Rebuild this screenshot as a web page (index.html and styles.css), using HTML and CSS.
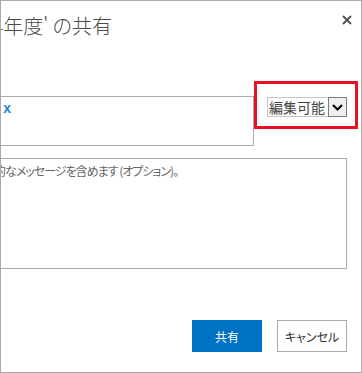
FILE: index.html
```html
<!DOCTYPE html>
<html lang="ja">
<head>
    <meta charset="UTF-8">
    <title>共有</title>
    <link rel="stylesheet" href="styles.css">
</head>
<body>
    <div class="dialog">
        <div class="content">
            <div class="dialog-header">
                <h1 class="dialog-title">'予算 2014年度' の共有</h1>
                <button class="close-btn" title="閉じる">
                    <svg width="10" height="10" viewBox="0 0 10 10">
                        <path d="M1 1 L9 9 M9 1 L1 9" stroke="#555" stroke-width="2" fill="none"/>
                    </svg>
                </button>
            </div>

            <div class="invite-row">
                <div class="people-box">
                    <span class="chip">山田 太郎 <span class="chip-remove">x</span></span>
                </div>
                <div class="highlight">
                    <div class="perm-select">
                        <span class="perm-value">編集可能</span>
                        <span class="perm-arrow">
                            <svg width="11" height="7" viewBox="0 0 11 7">
                                <path d="M1 1 L5.5 5.5 L10 1" stroke="#000" stroke-width="2" fill="none"/>
                            </svg>
                        </span>
                    </div>
                </div>
            </div>

            <div class="message-box">この共有の招待に個人的なメッセージを含めます (オプション)。</div>

            <div class="actions">
                <button class="btn btn-primary">共有</button>
                <button class="btn">キャンセル</button>
            </div>
        </div>
    </div>
</body>
</html>
```

FILE: styles.css
```css
html, body {
    margin: 0;
    padding: 0;
    background-color: #fff;
}
body {
    font-family: "Noto Sans CJK JP", "Noto Sans", sans-serif;
    font-feature-settings: "palt";
}
.dialog {
    width: 362px;
    height: 373px;
    box-sizing: border-box;
    border: 1px solid #ababab;
    padding-right: 14px;
    overflow: hidden;
}
.content {
    margin-left: -200px;
}
.dialog-header {
    display: flex;
    justify-content: space-between;
    align-items: flex-start;
    padding-top: 13px;
}
.dialog-title {
    margin: 0;
    font-size: 20px;
    line-height: 24px;
    font-weight: 300;
    color: #4a4a4a;
    white-space: nowrap;
    padding-left: 110px;
}
.close-btn {
    border: none;
    background: none;
    padding: 0;
    margin: 1px -5px 0 0;
    width: 10px;
    height: 10px;
    display: flex;
}
.invite-row {
    display: flex;
    align-items: flex-start;
    margin-top: 43px;
}
.people-box {
    flex: 1;
    height: 50px;
    box-sizing: border-box;
    margin-top: 15px;
    border: 1px solid #ababab;
    padding: 1px 0 0 139px;
    font-size: 14px;
    line-height: 18px;
    color: #333;
    white-space: nowrap;
}
.chip-remove {
    color: #1e82d6;
    font-family: "Liberation Sans", Arial, sans-serif;
    font-weight: bold;
}
.highlight {
    border: 3px solid #e81123;
    padding: 13px 8px 9px 10px;
    margin-right: -11px;
}
.perm-select {
    display: flex;
    width: 80px;
    height: 20px;
    box-sizing: border-box;
    border: 1px solid #c6c6c6;
}
.perm-value {
    flex: 1;
    font-size: 14px;
    line-height: 18px;
    color: #444;
    padding-left: 1px;
    white-space: nowrap;
}
.perm-arrow {
    width: 19px;
    height: 20px;
    box-sizing: border-box;
    margin: -1px -1px 0 0;
    border: 1px solid #7a7a7a;
    background-color: #f0f0f0;
    display: flex;
    align-items: center;
    justify-content: center;
}
.message-box {
    margin-top: 12px;
    height: 111px;
    box-sizing: border-box;
    border: 1px solid #ababab;
    padding: 3px 0 0 85px;
    font-size: 12px;
    letter-spacing: -1px;
    line-height: 18px;
    color: #666;
    white-space: nowrap;
}
.actions {
    display: flex;
    justify-content: flex-end;
    gap: 15px;
    margin-top: 51px;
}
.btn {
    width: 70px;
    height: 32px;
    box-sizing: border-box;
    border: 1px solid #ababab;
    background-color: #fff;
    color: #333;
    font-family: inherit;
    font-feature-settings: "palt";
    font-size: 12px;
    padding: 0;
}
.btn-primary {
    background-color: #0072c6;
    border-color: #0072c6;
    color: #fff;
}
```
